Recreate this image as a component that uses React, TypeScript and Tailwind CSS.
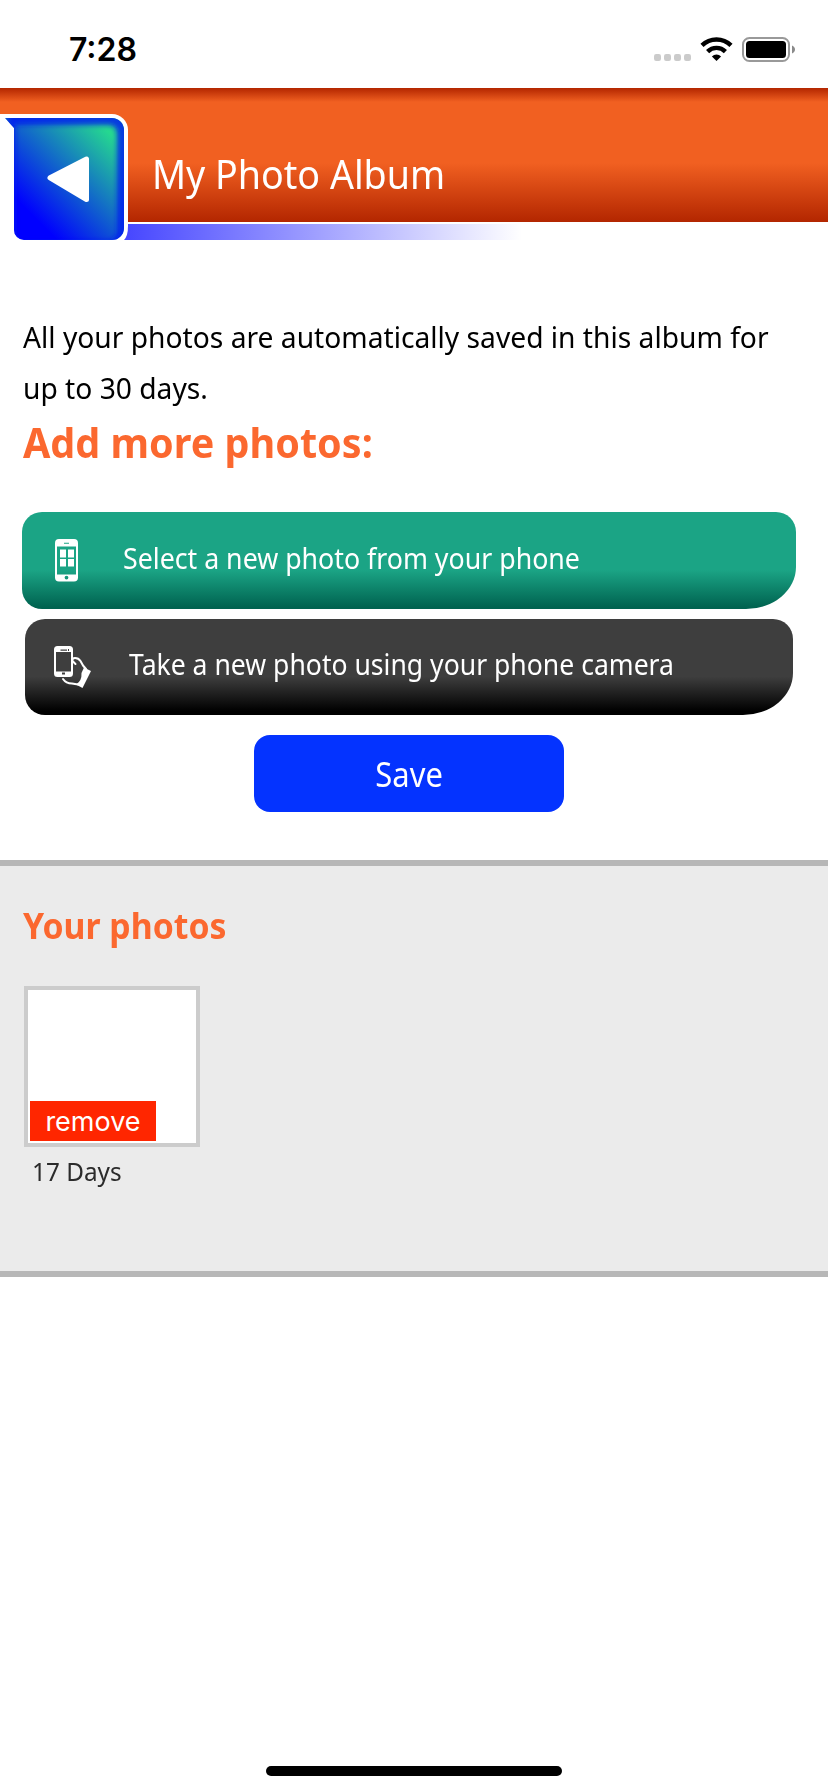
import React from "react";

function StatusBar() {
  return (
    <div className="flex h-[88px] items-start justify-between pl-[69px] pr-[32px]">
      <span className="mt-[30px] inline-block h-10 whitespace-nowrap font-[Inter,sans-serif] text-[32px] font-semibold leading-[40px] text-black">
        7:28
      </span>
      <svg className="mt-[30px]" width="142" height="40" viewBox="0 0 142 40">
        <g fill="#cbcbcb">
          <rect x="0" y="24" width="7" height="7" rx="2.2" />
          <rect x="10" y="24" width="7" height="7" rx="2.2" />
          <rect x="20" y="24" width="7" height="7" rx="2.2" />
          <rect x="30" y="24" width="7" height="7" rx="2.2" />
        </g>
        <g fill="none" stroke="#000" strokeWidth="4.4">
          <path d="M48 15.400a20.600 20.600 0 0 1 29 0" />
          <path d="M53.600 21.600a12.600 12.600 0 0 1 17.800 0" />
        </g>
        <path d="M62.500 31l-4.600-4.600a6.600 6.600 0 0 1 9.200 0z" fill="#000" />
        <rect x="89" y="8" width="46" height="23" rx="6.5" fill="none" stroke="#999" strokeWidth="2" />
        <rect x="92" y="11" width="40" height="17" rx="3.5" />
        <path d="M138 15.500c4 1.500 4 6.500 0 8z" fill="#8a8a8a" />
      </svg>
    </div>
  );
}

function BackButton() {
  return (
    <button aria-label="Back" className="absolute left-0 top-[26px] h-[126px] w-32">
      <svg width="128" height="126" viewBox="0 0 128 126">
        <defs>
          <linearGradient id="face" gradientUnits="userSpaceOnUse" x1="24" y1="108" x2="118" y2="14">
            <stop offset="0.08" stopColor="#0000ff" />
            <stop offset="0.93" stopColor="#25d890" />
          </linearGradient>
          <filter id="soft" x="-20%" y="-20%" width="140%" height="140%">
            <feGaussianBlur stdDeviation="2.6" />
          </filter>
          <clipPath id="shape">
            <path d="M5 4H112A12 12 0 0 1 124 16V114A12 12 0 0 1 112 126H24A10 10 0 0 1 14 116V14Z" />
          </clipPath>
        </defs>
        <path d="M0 0H112A16 16 0 0 1 128 16V112Q128 122 124 126H0Z" fill="#fff" />
        <g clipPath="url(#shape)">
          <rect width="128" height="126" fill="url(#face)" />
          <path
            d="M0 -4H134V134H8V0ZM15 11V118A9 9 0 0 0 24 127H108A9 9 0 0 0 117 118V19A8 8 0 0 0 109 11H15Z"
            fill="#0018f0"
            fillOpacity="0.82"
            fillRule="evenodd"
            filter="url(#soft)"
          />
        </g>
        <path d="M50 62.800L86.500 44V84.500Z" transform="translate(0 1)" fill="#fff" stroke="#fff" strokeWidth="5" strokeLinejoin="round" />
      </svg>
    </button>
  );
}

function Header() {
  return (
    <header className="relative flex h-[134px] items-center bg-[linear-gradient(to_bottom,#b32600_0,#f16021_14px,#f16021_75px,#b32600_134px)] pl-[152px] pt-[37px]">
      <h1 className="origin-left scale-x-[0.94] whitespace-nowrap text-[40px] leading-[54px] text-white">My Photo Album</h1>
      <div className="absolute left-[120px] top-[136px] h-4 w-[402px] bg-[linear-gradient(to_right,#4444ff,#ffffff)]" />
      <BackButton />
    </header>
  );
}

function PhoneGridIcon() {
  return (
    <svg className="shrink-0" width="24" height="43" viewBox="0 0 24 43">
      <path
        fill="#fff"
        fillRule="evenodd"
        d="M4 0H19Q23 0 23 4V38.500Q23 42.500 19 42.500H4Q0 42.500 0 38.500V4Q0 0 4 0ZM2 7.500V35.500H21V7.500ZM9 3.700V4.700H14V3.700ZM11.500 36.700A1.700 1.700 0 1 0 11.500 40.500A1.700 1.700 0 1 0 11.500 36.700Z"
      />
      <path fill="#fff" d="M5 10.500H11V18.500H5ZM13 10.500H19V18.500H13ZM5 20H11V27.500H5ZM13 20H19V27.500H13Z" />
    </svg>
  );
}

function PhoneHandIcon() {
  return (
    <svg className="shrink-0" width="38" height="43" viewBox="0 0 38 43">
      <path
        fill="#fff"
        fillRule="evenodd"
        d="M3.500 0H15.500Q19 0 19 3.500V27.500Q19 31 15.500 31H3.500Q0 31 0 27.500V3.500Q0 0 3.500 0ZM2 6V25.500H17V6ZM6.500 3.500V4.700H13V3.500ZM14 3V5H15V3ZM8 26.500V28.500H11V26.500Z"
      />
      <path
        fill="none"
        stroke="#fff"
        strokeWidth="2"
        strokeLinejoin="round"
        strokeLinecap="round"
        d="M21.500 18L18.500 15Q18 12 21 12Q24.500 12 26.500 15L29 19.500L32 23M9 33Q12 37.500 18 37.500L24 38.500"
      />
      <path fill="#fff" d="M30 21.500L37 25L28.500 42L22 38.500Q28 35 27.500 27Z" />
    </svg>
  );
}

export default function App() {
  return (
    <div className="flex h-[1792px] w-[828px] flex-col bg-white font-['Noto_Sans',sans-serif]">
      <StatusBar />
      <Header />
      <main className="flex flex-col">
        <div className="mt-[89px] pl-[23px]">
          <p className="origin-left scale-x-[0.956] whitespace-nowrap text-[29.5px] leading-[51px] text-black">
            All your photos are automatically saved in this album for
            <br />
            up to 30 days.
          </p>
          <h2 className="origin-left scale-x-[0.964] whitespace-nowrap text-[41px] font-bold leading-[58px] text-[#fb682f]">
            Add more photos:
          </h2>
        </div>
        <button className="ml-[22px] mt-[41px] flex h-[97px] w-[774px] items-center rounded-[20px] rounded-br-[50px_42px] bg-[linear-gradient(to_bottom,#1ba485_60%,#006350_98%)] pl-[33px]">
          <PhoneGridIcon />
          <span className="ml-[44px] origin-left scale-x-[0.938] whitespace-nowrap pb-[5px] text-[28.5px] text-white">
            Select a new photo from your phone
          </span>
        </button>
        <button className="ml-[25px] mt-[10px] flex h-24 w-[768px] items-center rounded-[20px] rounded-br-[50px_42px] bg-[linear-gradient(to_bottom,#3e3e3e_60%,#000_96%)] pl-[29px]">
          <PhoneHandIcon />
          <span className="ml-[37px] origin-left scale-x-[0.932] whitespace-nowrap pb-[5px] text-[28.5px] text-white">
            Take a new photo using your phone camera
          </span>
        </button>
        <button className="ml-[254px] mt-5 flex h-[77px] w-[310px] items-center justify-center rounded-2xl bg-[#0433ff] pt-[2px] text-[34px] text-white">
          <span className="scale-x-[0.91] whitespace-nowrap">Save</span>
        </button>
        <section className="mt-12 h-[417px] border-y-[6px] border-[#b7b7b7] bg-[#ebebeb] pl-6 pt-[39px]">
          <h3 className="-ml-px origin-left scale-x-[0.951] whitespace-nowrap text-[35.5px] font-bold leading-[40px] text-[#fb682f]">
            Your photos
          </h3>
          <div className="mt-[41px] flex h-[161px] w-44 items-end border-4 border-[#ccc] bg-white pb-[2px] pl-[2px]">
            <button className="flex h-10 w-[126px] items-center justify-center bg-[#ff2600] pt-[2px] font-[Inter,sans-serif] text-[27px] text-white">
              <span className="whitespace-nowrap">remove</span>
            </button>
          </div>
          <p className="ml-[8px] origin-left scale-x-[0.935] whitespace-nowrap text-[26px] leading-[48px] text-[#2b2b2b]">17 Days</p>
        </section>
      </main>
      <div className="mb-4 mt-auto h-[10px] w-[296px] self-center rounded-full bg-black" />
    </div>
  );
}
